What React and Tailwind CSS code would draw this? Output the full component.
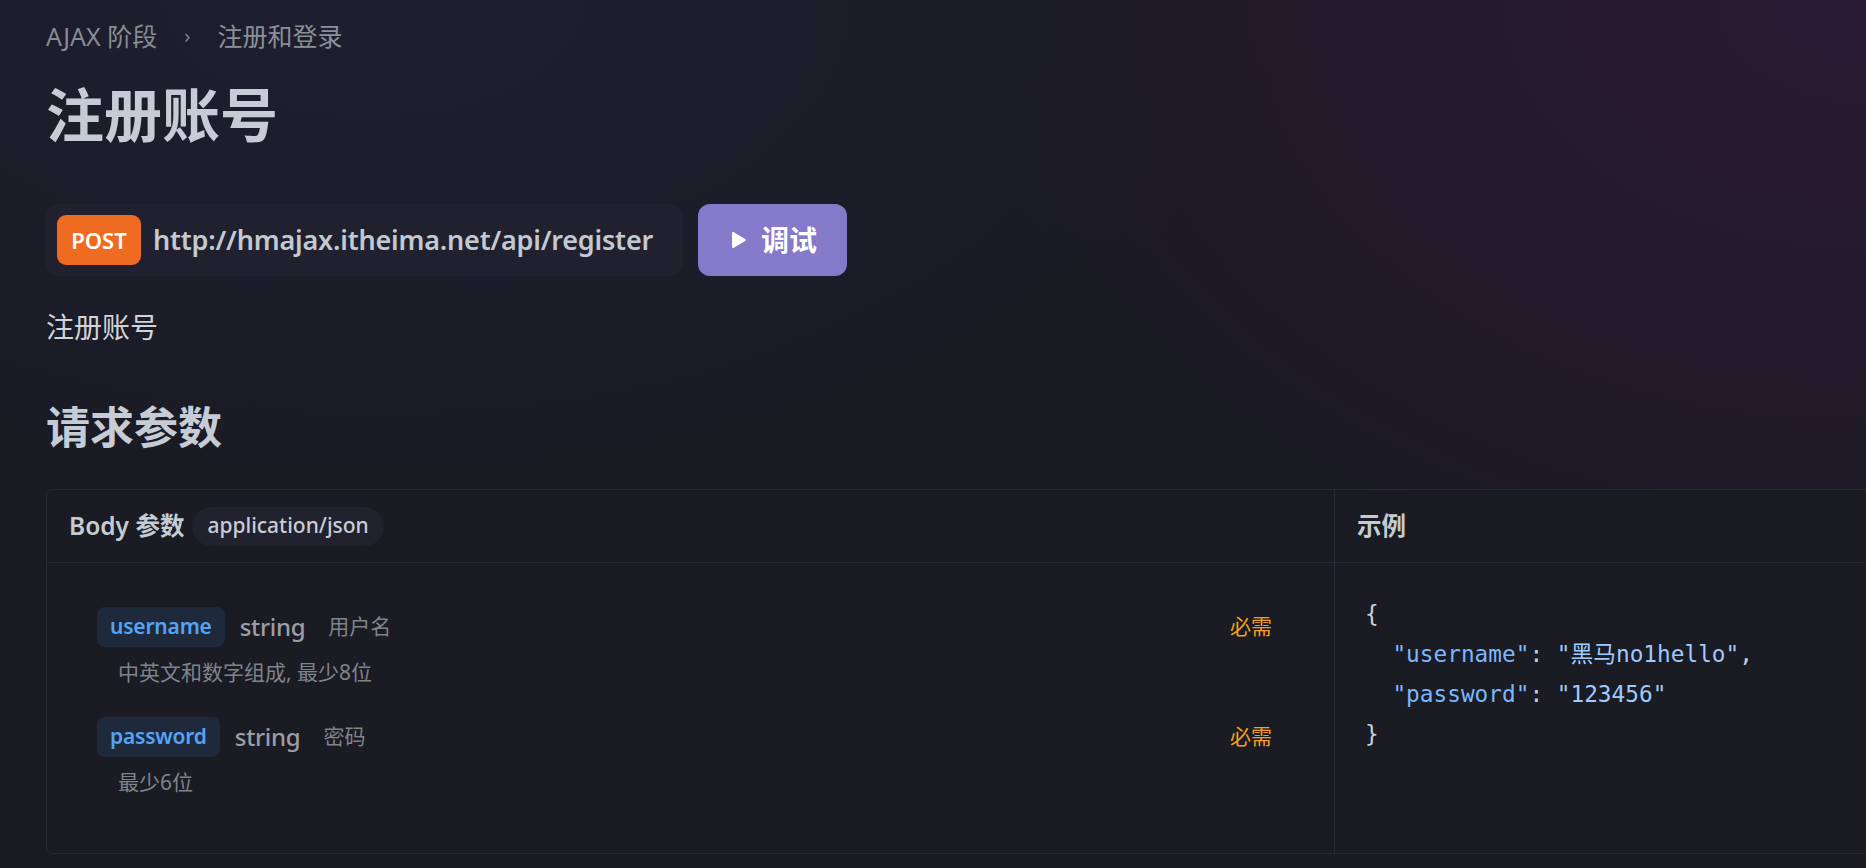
export default function App() {
  const sans = "font-['Noto_Sans','Noto_Sans_CJK_SC',sans-serif]";
  return (
    <div
      className={`w-[1866px] h-[868px] overflow-hidden bg-[#1b1b24] bg-[radial-gradient(ellipse_900px_620px_at_100%_0%,rgba(50,24,58,0.7),transparent),radial-gradient(ellipse_900px_500px_at_20%_0%,rgba(30,34,56,0.6),transparent)] ${sans} pl-[46px] pt-[20px]`}
    >
      {/* breadcrumb */}
      <div className="flex items-center text-[25px] leading-[32px] text-[#878b94]">
        <span>AJAX 阶段</span>
        <span className="mx-[27px] text-[20px] text-[#7d818a]">›</span>
        <span className="text-[#8b9098]">注册和登录</span>
      </div>

      {/* title */}
      <h1 className="mt-[29px] text-[58px] leading-[68px] font-semibold text-[#c5ccd6]">注册账号</h1>

      {/* url row */}
      <div className="mt-[55px] flex items-center gap-[15px]">
        <div className="flex h-[72px] items-center rounded-[12px] bg-[#20202f] pl-[11px] pr-[30px]">
          <span className="flex h-[50px] w-[84px] items-center justify-center rounded-[9px] bg-[#f06b22] text-[22px] font-semibold text-white">
            POST
          </span>
          <span className="ml-[12px] text-[27px] font-semibold text-[#c3c9d1] tracking-[-0.2px]">
            http://hmajax.itheima.net/api/register
          </span>
        </div>
        <button className="flex h-[72px] w-[149px] items-center justify-center gap-[14px] rounded-[12px] bg-[#8579c9] text-white">
          <svg width="17" height="18" viewBox="0 0 17 18" className="ml-[2px]">
            <path d="M2 2.2 C2 1.2 3 0.7 3.9 1.2 L15.2 8 C16 8.5 16 9.5 15.2 10 L3.9 16.8 C3 17.3 2 16.8 2 15.8 Z" fill="white" />
          </svg>
          <span className="text-[28px] font-bold">调试</span>
        </button>
      </div>

      {/* description */}
      <p className="mt-[31px] text-[28px] leading-[40px] text-[#d0d4da]">注册账号</p>

      {/* section heading */}
      <h2 className="mt-[52px] text-[44px] leading-[56px] font-semibold text-[#c5ccd6]">请求参数</h2>

      {/* table */}
      <div className="mt-[34px] w-[1900px] rounded-[6px] border border-[#282935] bg-[#1b1b24]">
        <div className="flex h-[73px] border-b border-[#282935]">
          <div className="flex w-[1288px] items-center gap-[8px] border-r border-[#282935] pl-[22px]">
            <span className="text-[24.5px] font-semibold text-[#c5cbd3]">Body 参数</span>
            <span className="flex h-[39px] items-center rounded-full bg-[#22222e] px-[15px] text-[21px] font-medium text-[#c9ced6]">
              application/json
            </span>
          </div>
          <div className="flex flex-1 items-center pl-[22px]">
            <span className="text-[24.5px] font-semibold text-[#c5cbd3]">示例</span>
          </div>
        </div>
        <div className="flex">
          <div className="w-[1288px] border-r border-[#282935] pl-[50px] pr-[62px] pt-[44px] pb-[55px]">
            <div className="flex flex-col gap-[29px]">
              {[
                { name: "username", label: "用户名", desc: "中英文和数字组成, 最少8位" },
                { name: "password", label: "密码", desc: "最少6位" },
              ].map((f) => (
                <div key={f.name}>
                  <div className="flex h-[40px] items-center">
                    <span className="flex h-[40px] items-center rounded-[8px] bg-[#1e2a3c] px-[13px] text-[21px] font-semibold tracking-[-0.2px] text-[#54a3f5]">
                      {f.name}
                    </span>
                    <span className="ml-[15px] text-[24px] font-medium tracking-[-0.3px] text-[#9a9fa7]">string</span>
                    <span className="ml-[23px] text-[21px] text-[#7f838b]">{f.label}</span>
                    <span className="ml-auto text-[21px] text-[#f2a01c]">必需</span>
                  </div>
                  <div className="mt-[9px] pl-[21px] text-[21px] leading-[32px] text-[#7f838b]">{f.desc}</div>
                </div>
              ))}
            </div>
          </div>
          <div className="flex-1 pl-[30px] pt-[31px]">
            <pre className="font-['DejaVu_Sans_Mono','Noto_Sans_CJK_SC',monospace] text-[22.75px] leading-[40px] text-[#c9d1d9]">
              <div>{"{"}</div>
              <div>
                {"  "}
                <span className="text-[#79b8ff]">"username"</span>
                {": "}
                <span className="text-[#9ecbff]">"黑马no1hello"</span>
                {","}
              </div>
              <div>
                {"  "}
                <span className="text-[#79b8ff]">"password"</span>
                {": "}
                <span className="text-[#9ecbff]">"123456"</span>
              </div>
              <div>{"}"}</div>
            </pre>
          </div>
        </div>
      </div>
    </div>
  );
}
